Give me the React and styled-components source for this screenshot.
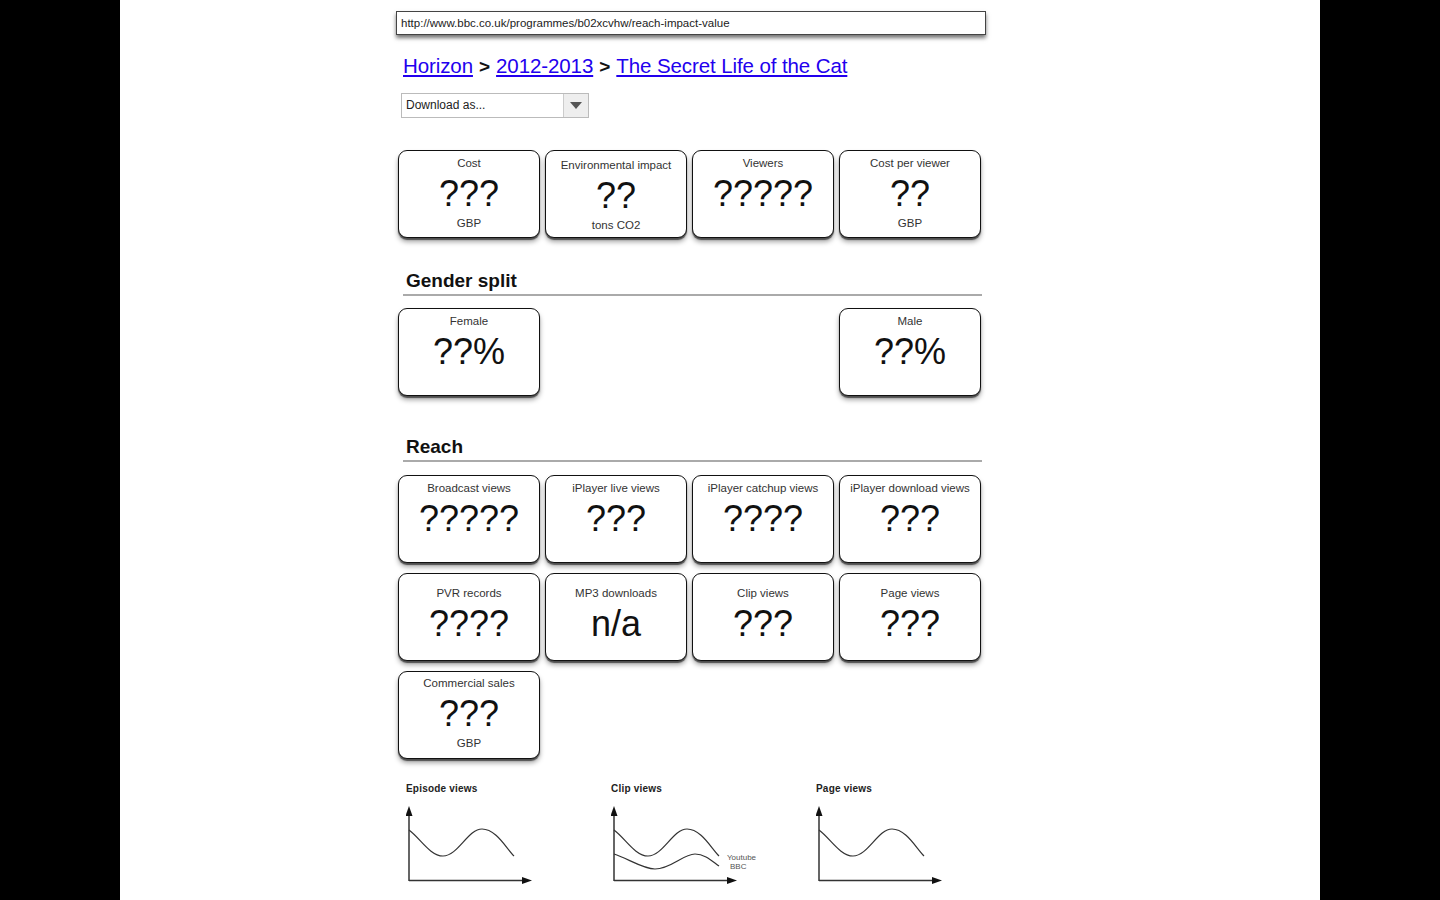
import React from "react";
import styled, { createGlobalStyle } from "styled-components";

const GlobalStyle = createGlobalStyle`
  html, body {
    margin: 0;
    padding: 0;
    background: #000;
  }
  body {
    font-family: "Liberation Sans", Arial, sans-serif;
    color: #111;
  }
`;

const topCards = [
  { label: "Cost", value: "???", unit: "GBP" },
  { label: "Environmental impact", value: "??", unit: "tons CO2", top: 8 },
  { label: "Viewers", value: "?????" },
  { label: "Cost per viewer", value: "??", unit: "GBP" },
];

const reachCards = [
  { label: "Broadcast views", value: "?????" },
  { label: "iPlayer live views", value: "???" },
  { label: "iPlayer catchup views", value: "????" },
  { label: "iPlayer download views", value: "???" },
  { label: "PVR records", value: "????", top: 13 },
  { label: "MP3 downloads", value: "n/a", top: 13 },
  { label: "Clip views", value: "???", top: 13 },
  { label: "Page views", value: "???", top: 13 },
  { label: "Commercial sales", value: "???", unit: "GBP", top: 5 },
];

const WAVE = "M3 25 C 14 33, 24 51, 37 51 C 52 51, 62 24, 76 24 C 90 24, 100 43, 108 51";
const WAVE_LOW = "M3 49 C 16 53, 32 64, 44 64 C 60 64, 72 49, 84 49 C 94 49, 101 56, 108 61";

const Chart = ({ title, second }) => (
  <ChartBox>
    <ChartTitle>{title}</ChartTitle>
    <svg width="150" height="82" viewBox="0 0 150 82">
      <path d="M3 76 L3 10" stroke="#333" strokeWidth="1.5" fill="none" />
      <path d="M3 1 L-0.5 11 L6.5 11 Z" fill="#111" />
      <path d="M3 75.5 L117 75.5" stroke="#333" strokeWidth="1.5" fill="none" />
      <path d="M126 75.5 L116 72 L116 79 Z" fill="#111" />
      <path d={WAVE} stroke="#333" strokeWidth="1.2" fill="none" />
      {second && (
        <>
          <path d={WAVE_LOW} stroke="#333" strokeWidth="1.2" fill="none" />
          <text x="116" y="55" fontSize="8" fill="#555" fontFamily="Liberation Sans, sans-serif">Youtube</text>
          <text x="119" y="64" fontSize="8" fill="#555" fontFamily="Liberation Sans, sans-serif">BBC</text>
        </>
      )}
    </svg>
  </ChartBox>
);

const Card = ({ label, value, unit, top, col }) => (
  <CardBox $top={top} $col={col}>
    <CardLabel>{label}</CardLabel>
    <CardValue>{value}</CardValue>
    {unit && <CardUnit>{unit}</CardUnit>}
  </CardBox>
);

export default function App() {
  return (
    <Page>
      <GlobalStyle />
      <Sheet>
        <Content>
          <UrlBar>http://www.bbc.co.uk/programmes/b02xcvhw/reach-impact-value</UrlBar>

          <Breadcrumb>
            <Crumb href="#">Horizon</Crumb>
            <Sep>&gt;</Sep>
            <Crumb href="#">2012-2013</Crumb>
            <Sep>&gt;</Sep>
            <Crumb href="#">The Secret Life of the Cat</Crumb>
          </Breadcrumb>

          <Select>
            <SelectText>Download as...</SelectText>
            <SelectArrow>
              <svg width="12" height="8" viewBox="0 0 12 8">
                <path d="M0 0 L12 0 L6 7 Z" fill="#555" />
              </svg>
            </SelectArrow>
          </Select>

          <CardGrid $mt={32}>
            {topCards.map((c) => (
              <Card key={c.label} {...c} />
            ))}
          </CardGrid>

          <SectionHead $mt={32}>
            <SectionTitle>Gender split</SectionTitle>
          </SectionHead>
          <CardGrid $mt={12}>
            <Card label="Female" value="??%" col={1} />
            <Card label="Male" value="??%" col={4} />
          </CardGrid>

          <SectionHead $mt={40}>
            <SectionTitle>Reach</SectionTitle>
          </SectionHead>
          <CardGrid $mt={13}>
            {reachCards.map((c) => (
              <Card key={c.label} {...c} />
            ))}
          </CardGrid>

          <Charts>
            <Chart title="Episode views" />
            <Chart title="Clip views" second />
            <Chart title="Page views" />
          </Charts>
        </Content>
      </Sheet>
    </Page>
  );
}

const Page = styled.div`
  display: flex;
  justify-content: center;
  background: #000;
  min-height: 900px;
`;

const Sheet = styled.div`
  width: 1200px;
  min-height: 900px;
  background: #fff;
  overflow: hidden;
`;

const Content = styled.div`
  margin-left: 276px;
  width: 592px;
  padding-top: 11px;
`;

const UrlBar = styled.div`
  width: 584px;
  height: 22px;
  border: 1px solid #444;
  box-shadow: 0 3px 4px rgba(0, 0, 0, 0.55);
  font-size: 11.5px;
  line-height: 22px;
  padding-left: 4px;
  color: #222;
  white-space: nowrap;
  overflow: hidden;
`;

const Breadcrumb = styled.div`
  margin-top: 19px;
  padding-left: 7px;
  font-size: 20.5px;
  line-height: 24px;
  height: 24px;
  display: flex;
  align-items: baseline;
`;

const Crumb = styled.a`
  color: #2200ee;
  text-decoration: underline;
  text-underline-offset: 2px;
  letter-spacing: -0.1px;
`;

const Sep = styled.span`
  font-weight: bold;
  color: #111;
  margin: 0 6px;
  font-size: 19px;
`;

const Select = styled.div`
  margin-top: 15px;
  margin-left: 5px;
  width: 186px;
  height: 23px;
  border: 1px solid #bbb;
  display: flex;
`;

const SelectText = styled.div`
  flex: 1;
  font-size: 12px;
  line-height: 23px;
  padding-left: 4px;
  color: #222;
`;

const SelectArrow = styled.div`
  width: 24px;
  border-left: 1px solid #ccc;
  background: #eee;
  display: flex;
  align-items: center;
  justify-content: center;
`;

const CardGrid = styled.div`
  margin-top: ${(p) => p.$mt}px;
  padding-left: 2px;
  display: grid;
  grid-template-columns: repeat(4, 142px);
  grid-auto-rows: 88px;
  column-gap: 5px;
  row-gap: 10px;
`;

const CardBox = styled.div`
  grid-column: ${(p) => (p.$col ? p.$col : "auto")};
  box-sizing: border-box;
  border: 1px solid #111;
  border-radius: 9px;
  background: #fff;
  box-shadow: 0 2px 1px rgba(0, 0, 0, 0.55), 0 4px 5px rgba(0, 0, 0, 0.35);
  display: flex;
  flex-direction: column;
  align-items: center;
  padding-top: ${(p) => (p.$top !== undefined ? p.$top : 6)}px;
`;

const CardLabel = styled.div`
  font-size: 11.5px;
  line-height: 13px;
  color: #333;
  white-space: nowrap;
`;

const CardValue = styled.div`
  margin-top: 6px;
  font-size: 36px;
  line-height: 36px;
  color: #111;
`;

const CardUnit = styled.div`
  margin-top: 5px;
  font-size: 11.5px;
  line-height: 13px;
  color: #333;
`;

const SectionHead = styled.div`
  margin-top: ${(p) => p.$mt}px;
  margin-left: 7px;
  width: 579px;
  border-bottom: 2px solid #aaa;
  padding-bottom: 2px;
`;

const SectionTitle = styled.div`
  padding-left: 3px;
  font-size: 19px;
  line-height: 22px;
  font-weight: bold;
  color: #111;
`;

const Charts = styled.div`
  margin-top: 24px;
  margin-left: 10px;
  display: grid;
  grid-template-columns: repeat(3, 205px);
`;

const ChartBox = styled.div`
  display: flex;
  flex-direction: column;
`;

const ChartTitle = styled.div`
  font-size: 10px;
  line-height: 12px;
  font-weight: bold;
  color: #222;
  letter-spacing: 0.2px;
  margin-bottom: 10px;
`;
